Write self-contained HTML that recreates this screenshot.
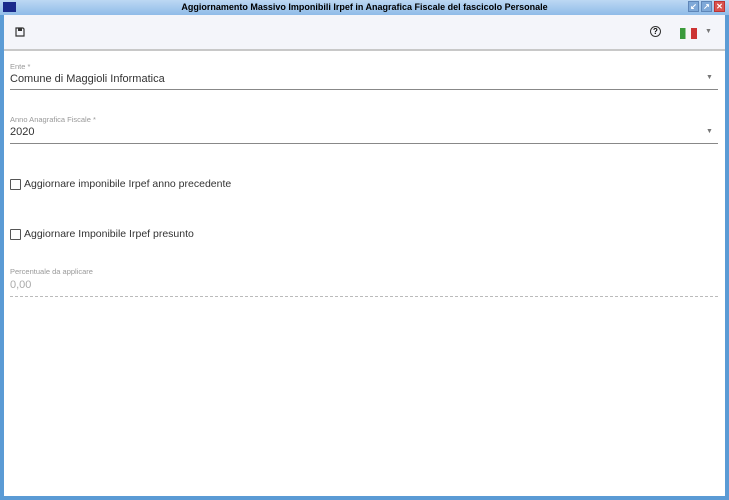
<!DOCTYPE html>
<html><head><meta charset="utf-8"><style>
*{margin:0;padding:0;box-sizing:border-box}
body{width:729px;height:500px;overflow:hidden;font-family:"Liberation Sans",sans-serif;background:#fff;position:relative}
.win{position:absolute;inset:0;border:4px solid #5b9bd5;border-top:none;background:#fff}
.title{position:absolute;left:0;top:0;width:729px;height:15px;background:linear-gradient(#bcd8f3,#8fbbe8);font-size:9px;font-weight:bold;text-align:center;line-height:15px;color:#000}
.logo{position:absolute;left:3px;top:2px;width:13px;height:10px;background:#1a2a8c}
.btns{position:absolute;right:4px;top:1px;display:flex;gap:2px}
.btns div{width:11px;height:11px;background:#7fa9d8;border:1px solid #5e86b8;color:#fff;font-size:8px;line-height:9px;text-align:center}
.btns div.x{background:#d9534f;border-color:#b33}
.tb{position:absolute;left:4px;top:15px;width:721px;height:36px;background:#f4f5fa;border-bottom:2px solid #c8c8c8}
.lbl{position:absolute;left:10px;font-size:7.5px;color:#999}
.val{position:absolute;left:10px;font-size:11px;color:#333}
.line{position:absolute;left:10px;width:708px;border-top:1px solid #888}
.arr{position:absolute;left:706px;font-size:7px;color:#777}
.cb{position:absolute;left:10px;width:11px;height:11px;border:1.5px solid #555;border-radius:1px}
.ct{position:absolute;left:24px;font-size:10.5px;color:#333}
</style></head><body>
<div class="win"></div>
<div class="title"><div class="logo"></div>Aggiornamento Massivo Imponibili Irpef in Anagrafica Fiscale del fascicolo Personale
<div class="btns"><div>↙</div><div>↗</div><div class="x">✕</div></div></div>
<div class="tb">
<svg style="position:absolute;left:11px;top:12px" width="10" height="10" viewBox="0 0 10 10"><path d="M1 1h7l1 1v7H1z" fill="none" stroke="#333" stroke-width="1.2"/><rect x="3" y="1" width="4" height="3" fill="#333"/></svg>
<div style="position:absolute;left:646px;top:11px;width:11px;height:11px;border:1.2px solid #333;border-radius:50%;font-size:8px;font-weight:bold;text-align:center;line-height:9px">?</div>
<div style="position:absolute;left:676px;top:13px;width:17px;height:11px;background:linear-gradient(90deg,#3a9a3a 33%,#f5f5f5 33% 66%,#cc3333 66%)"></div>
<div style="position:absolute;left:701px;top:13px;font-size:7px;color:#777">▼</div>
</div>
<div class="lbl" style="top:62px">Ente *</div>
<div class="val" style="top:73px">Comune di Maggioli Informatica</div>
<div class="arr" style="top:74px">▼</div>
<div class="line" style="top:89px"></div>
<div class="lbl" style="top:115px">Anno Anagrafica Fiscale *</div>
<div class="val" style="top:126px">2020</div>
<div class="arr" style="top:128px">▼</div>
<div class="line" style="top:143px"></div>
<div class="cb" style="top:179px"></div><div class="ct" style="top:178px">Aggiornare imponibile Irpef anno precedente</div>
<div class="cb" style="top:229px"></div><div class="ct" style="top:228px">Aggiornare Imponibile Irpef presunto</div>
<div class="lbl" style="top:267px">Percentuale da applicare</div>
<div class="val" style="top:279px;color:#aaa">0,00</div>
<div class="line" style="top:296px;border-top:1px dashed #bbb"></div>
</body></html>
